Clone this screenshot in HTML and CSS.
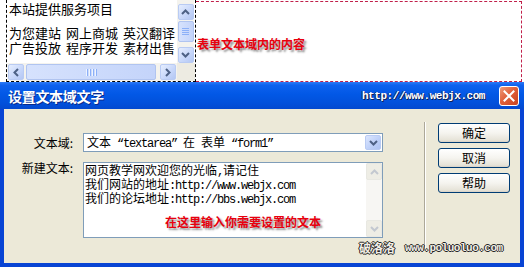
FILE: index.html
```html
<!DOCTYPE html>
<html>
<head>
<meta charset="utf-8">
<link rel="stylesheet" href="styles.css">
</head>
<body>
<div class="page">
  <div class="top">
    <div class="ta-wrap">
      <div class="ta">
        <div class="ta-main">
          <div class="ta-text">
            <div class="l1">本站提供服务项目</div>
            <div class="blank"></div>
            <div class="ln">为您建站<span class="sp"></span>网上商城<span class="sp"></span>英汉翻译</div>
            <div class="ln">广告投放<span class="sp"></span>程序开发<span class="sp"></span>素材出售</div>
          </div>
          <div class="vscroll">
            <div class="sbtn up"><svg width="9" height="6" viewBox="0 0 9 6"><path d="M1 5 L4.5 1.5 L8 5" fill="none" stroke="#4D6185" stroke-width="2"/></svg></div>
            <div class="vthumb"><span></span><span></span><span></span><span></span></div>
            <div class="vtrack"></div>
            <div class="sbtn down"><svg width="9" height="6" viewBox="0 0 9 6"><path d="M1 1 L4.5 4.5 L8 1" fill="none" stroke="#4D6185" stroke-width="2"/></svg></div>
          </div>
        </div>
        <div class="hrow">
          <div class="hscroll">
            <div class="sbtn left"><svg width="6" height="9" viewBox="0 0 6 9"><path d="M5 1 L1.5 4.5 L5 8" fill="none" stroke="#4D6185" stroke-width="2"/></svg></div>
            <div class="hthumb"><span></span><span></span><span></span><span></span></div>
            <div class="sbtn right"><svg width="6" height="9" viewBox="0 0 6 9"><path d="M1 1 L4.5 4.5 L1 8" fill="none" stroke="#4D6185" stroke-width="2"/></svg></div>
          </div>
          <div class="corner"></div>
        </div>
      </div>
    </div>
    <div class="note-box"><span class="red-note">表单文本域内的内容</span></div>
  </div>

  <div class="dialog">
    <div class="titlebar">
      <span class="title">设置文本域文字</span>
      <span class="url">http://www.webjx.com</span>
      <span class="close"><svg width="12" height="12" viewBox="0 0 12 12"><path d="M1.5 1.5 L10.5 10.5 M10.5 1.5 L1.5 10.5" stroke="#fff" stroke-width="2" stroke-linecap="square"/></svg></span>
    </div>
    <div class="dbody">
      <div class="form">
        <div class="label l-sel">文本域:</div>
        <div class="select">
          <div class="sel-text">文本<span class="lat"> “textarea” </span>在<span class="lat"> </span>表单<span class="lat"> “form1”</span></div>
          <div class="sel-btn"><svg width="9" height="6" viewBox="0 0 9 6"><path d="M1 1 L4.5 4.5 L8 1" fill="none" stroke="#4D6185" stroke-width="2"/></svg></div>
        </div>
        <div class="label l-ta">新建文本:</div>
        <div class="textarea">
          <div class="tx">
            <div>网页教学网欢迎您的光临<span class="lat">,</span>请记住</div>
            <div>我们网站的地址<span class="lat">:http://www.webjx.com</span></div>
            <div>我们的论坛地址<span class="lat">:http://bbs.webjx.com</span></div>
            <div class="red-in">在这里输入你需要设置的文本</div>
          </div>
          <div class="dscroll">
            <div class="dbtn"><svg width="9" height="6" viewBox="0 0 9 6"><path d="M1 5 L4.5 1.5 L8 5" fill="none" stroke="#C3C8D0" stroke-width="2"/></svg></div>
            <div class="dbtn"><svg width="9" height="6" viewBox="0 0 9 6"><path d="M1 1 L4.5 4.5 L8 1" fill="none" stroke="#C3C8D0" stroke-width="2"/></svg></div>
          </div>
        </div>
      </div>
      <div class="sep"></div>
      <div class="buttons">
        <div class="btn">确定</div>
        <div class="btn">取消</div>
        <div class="btn">帮助</div>
      </div>
    </div>
    <div class="watermark"><span class="wm-cn">破洛洛</span><span class="wm-url">www.poluoluo.com</span></div>
  </div>
</div>
</body>
</html>
```

FILE: styles.css
```css
* { box-sizing: border-box; }
html, body { margin: 0; padding: 0; }
body {
  width: 524px;
  height: 267px;
  overflow: hidden;
  background: #fff;
  font-family: "Noto Sans CJK SC", sans-serif;
}
.page { width: 524px; height: 267px; position: relative; }

/* top area */
.top { height: 82px; display: flex; }
.ta-wrap {
  margin-left: 6px;
  width: 190px;
  height: 82px;
  border-left: 1px dashed #000;
  border-right: 1px dashed #000;
  border-bottom: 1px dashed #000;
}
.ta { display: flex; flex-direction: column; height: 81px; }
.ta-main { display: flex; height: 63px; }
.ta-text {
  flex: 1;
  padding: 1px 0 0 2px;
  font-size: 13px;
  line-height: 15px;
  color: #000;
  white-space: nowrap;
  overflow: hidden;
}
.sp { display: inline-block; width: 5px; }
.blank { height: 9px; }
.vscroll {
  width: 17px;
  margin-right: 1px;
  background: #F4F3EE;
  display: flex;
  flex-direction: column;
  align-items: center;
  padding-top: 4px;
}
.sbtn {
  width: 16px;
  height: 16px;
  border: 1px solid #B9CBF3;
  border-radius: 2px;
  background: linear-gradient(135deg, #E6EEFE 0%, #C6D6FA 60%, #B4C7F3 100%);
  display: flex;
  align-items: center;
  justify-content: center;
}
.vthumb, .hthumb {
  border: 1px solid #B0C4F0;
  border-radius: 2px;
  background: linear-gradient(90deg, #D6E2FD, #C4D4FA);
  display: flex;
  align-items: center;
  justify-content: center;
}
.vthumb { width: 16px; height: 21px; margin-top: 1px; flex-direction: column; gap: 1px; }
.vthumb span { width: 7px; height: 1px; background: #EEF4FE; border-bottom: 1px solid #8CB0F8; }
.vtrack { height: 5px; }
.hrow { display: flex; height: 18px; }
.hscroll {
  flex: 1;
  background: #F4F3EE;
  display: flex;
  align-items: center;
  padding: 0 1px;
  gap: 2px;
}
.hthumb { flex: 1; height: 16px; margin-right: 2px; gap: 1px; }
.hthumb span { height: 7px; background: #8CB0F8; border-left: 1px solid #EEF4FE; width: 2px; }
.corner { width: 18px; background: #EDEBE2; }
.note-box {
  flex: 1;
  margin-top: 1px;
  margin-right: 2px;
  height: 81px;
  border: 1px dashed #C0204A;
  border-left: none;
  display: flex;
  align-items: center;
  padding-left: 1px;
  padding-top: 3px;
}
.red-note, .red-in {
  color: #E8000E;
  font-weight: bold;
  font-size: 12px;
  text-shadow: 2px 2px 2px rgba(0, 0, 0, 0.45);
}

/* dialog */
.dialog {
  height: 185px;
  background: #0844D4;
  display: flex;
  flex-direction: column;
}
.titlebar {
  height: 27px;
  background: linear-gradient(#2C7BF8 0%, #0E61EE 12%, #0258E6 45%, #0250DA 80%, #0349CF 100%);
  display: flex;
  align-items: center;
  padding-left: 8px;
  padding-right: 5px;
}
.title {
  color: #fff;
  font-size: 14px;
  font-weight: bold;
  text-shadow: 1px 1px 0 #0A2A8A;
  letter-spacing: -0.3px;
}
.url {
  margin-left: auto;
  margin-right: 14px;
  color: #fff;
  font-family: "Liberation Mono", monospace;
  font-weight: bold;
  font-size: 11px;
  letter-spacing: -0.45px;
  text-shadow: 1px 1px 0 #10245a, -1px 0 0 #1a3070;
}
.close {
  width: 20px;
  height: 20px;
  border: 1px solid #fff;
  border-radius: 3px;
  background: linear-gradient(135deg, #EE9A7A 0%, #E0613C 45%, #C8421E 100%);
  display: flex;
  align-items: center;
  justify-content: center;
  margin-top: 1px;
}
.dbody {
  flex: 1;
  margin: 0 4px 4px 4px;
  background: #ECE9D8;
  display: flex;
  align-items: flex-start;
}
.form {
  width: 379px;
  margin-top: 24px;
  display: grid;
  grid-template-columns: 79px 300px;
  row-gap: 10px;
}
.label {
  font-size: 12px;
  line-height: 12px;
  text-align: right;
  padding-right: 10px;
  color: #000;
}
.l-sel { align-self: center; }
.select {
  height: 19px;
  background: #fff;
  border: 1px solid #7F9DB9;
  display: flex;
  align-items: center;
  padding: 0 1px 0 3px;
}
.sel-text {
  flex: 1;
  font-size: 12px;
  line-height: 12px;
  white-space: pre;
}
.lat { letter-spacing: -1.2px; font-family: "Liberation Mono", monospace; white-space: pre; }
.sel-btn {
  width: 16px;
  height: 15px;
  border: 1px solid #B9CBF3;
  border-radius: 2px;
  background: linear-gradient(135deg, #DCE6FE 0%, #BCCFF8 60%, #AEC3F2 100%);
  display: flex;
  align-items: center;
  justify-content: center;
}
.textarea {
  height: 76px;
  background: #fff;
  border: 1px solid #7F9DB9;
  display: flex;
}
.tx {
  flex: 1;
  padding: 1px 0 0 1px;
  font-size: 12px;
  line-height: 12px;
  white-space: nowrap;
}
.red-in { margin-top: 10px; margin-left: 80px; }
.dscroll {
  width: 16px;
  background: #F7F6F3;
  display: flex;
  flex-direction: column;
  justify-content: space-between;
}
.dbtn {
  height: 17px;
  border: 1px solid #E8E8E2;
  border-radius: 2px;
  background: #EEEDE5;
  display: flex;
  align-items: center;
  justify-content: center;
}
.sep {
  width: 2px;
  height: 128px;
  margin-left: 41px;
  margin-top: 13px;
  border-left: 1px solid #ACA899;
  border-right: 1px solid #fff;
}
.buttons {
  margin-left: 12px;
  margin-top: 14px;
  display: flex;
  flex-direction: column;
  gap: 5px;
}
.btn {
  width: 72px;
  height: 20px;
  border: 1px solid #003C74;
  border-radius: 3px;
  background: linear-gradient(#FFFFFF 0%, #F5F4EF 50%, #E6E3D8 90%, #D6D0C5 100%);
  font-size: 12px;
  line-height: 18px;
  text-align: center;
  color: #000;
}
.watermark {
  position: absolute;
  left: 359px;
  top: 239px;
  display: flex;
  align-items: center;
  gap: 10px;
  color: #F2EFE6;
  text-shadow: 1px 0 0 #222, -1px 0 0 #222, 0 1px 0 #222, 0 -1px 0 #222;
}
.wm-cn { font-size: 12px; font-weight: bold; }
.wm-url { font-family: "Liberation Mono", monospace; font-size: 11px; font-weight: bold; letter-spacing: -0.5px; }
```
